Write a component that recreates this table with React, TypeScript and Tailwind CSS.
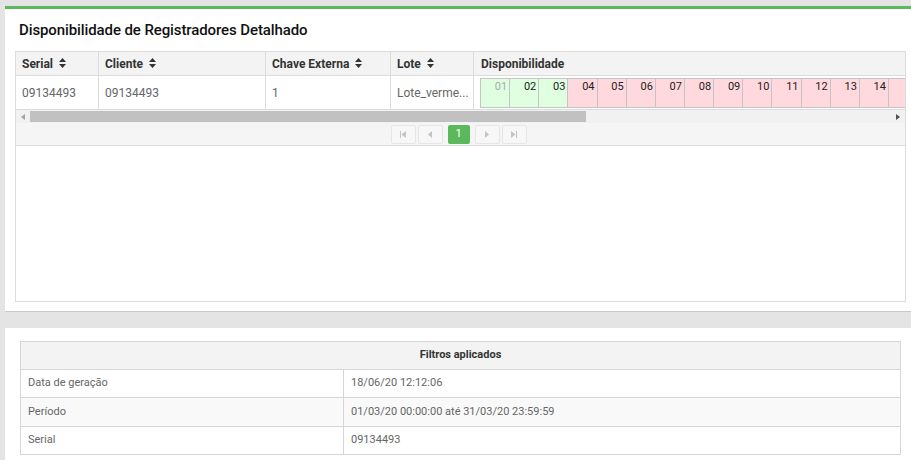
import React from "react";

const days = Array.from({ length: 14 }, (_, i) => String(i + 1).padStart(2, "0"));

function SortIcon() {
  return (
    <svg width="7" height="10" viewBox="0 0 7 10" className="inline-block ml-[6px] -mt-[2px]">
      <path d="M3.5 0 L7 4 L0 4 Z" fill="#333" />
      <path d="M3.5 10 L7 6 L0 6 Z" fill="#333" />
    </svg>
  );
}

function PagBtn({ children }: { children: React.ReactNode }) {
  return (
    <div className="w-[25px] h-[19px] border border-[#e6e6e6] rounded-[2px] bg-[#f7f7f8] flex items-center justify-center">
      {children}
    </div>
  );
}

export default function App() {
  return (
    <div
      className="w-[911px] h-[460px] overflow-hidden bg-[#e4e4e4] pl-[5px] pt-[6px]"
      style={{ fontFamily: "Roboto, 'Liberation Sans', sans-serif" }}
    >
      {/* Panel 1 */}
      <div className="w-[920px] h-[306px] bg-white border-t-[3px] border-[#5cb85c] border-b border-b-[#c9c9c9] px-[10px] flex flex-col">
        <div className="h-[42px] flex items-center pl-[4px] pt-[1px]">
          <h1 className="text-[15px] font-medium text-[#111] tracking-[-0.1px]">
            Disponibilidade de Registradores Detalhado
          </h1>
        </div>
        <div className="w-[891px] h-[251px] border border-[#dcdcdc] flex flex-col overflow-hidden">
          {/* header */}
          <div className="flex h-[24px] bg-[#f3f3f3] border-b border-[#dcdcdc] text-[12px] font-bold text-[#333]">
            <div className="w-[83px] border-r border-[#dcdcdc] pl-[6px] flex items-center">Serial<SortIcon /></div>
            <div className="w-[167px] border-r border-[#dcdcdc] pl-[6px] flex items-center">Cliente<SortIcon /></div>
            <div className="w-[125px] border-r border-[#dcdcdc] pl-[6px] flex items-center">Chave Externa<SortIcon /></div>
            <div className="w-[83px] border-r border-[#dcdcdc] pl-[6px] flex items-center">Lote<SortIcon /></div>
            <div className="flex-1 pl-[7px] flex items-center">Disponibilidade</div>
          </div>
          {/* row */}
          <div className="flex h-[34px] border-b border-[#dcdcdc] text-[12px] text-[#666]">
            <div className="w-[83px] border-r border-[#dcdcdc] pl-[6px] flex items-center">09134493</div>
            <div className="w-[167px] border-r border-[#dcdcdc] pl-[6px] flex items-center">09134493</div>
            <div className="w-[125px] border-r border-[#dcdcdc] pl-[6px] flex items-center">1</div>
            <div className="w-[83px] border-r border-[#dcdcdc] pl-[6px] flex items-center">Lote_verme...</div>
            <div className="w-[431px] min-w-0 pl-[6px] pt-[2px] overflow-hidden">
              <div className="flex h-[30px] border border-[#c4c4c4] w-max">
                {days.map((d, i) => (
                  <div
                    key={d}
                    className={`w-[29.15px] h-full border-r border-[#c4c4c4] text-[11px] text-right pr-[2px] leading-[13px] pt-[1px] ${
                      i < 3 ? "bg-[#dfffe0]" : "bg-[#ffd9dd]"
                    } ${i === 0 ? "text-[#aaa]" : "text-[#222]"}`}
                  >
                    {d}
                  </div>
                ))}
                <div className="w-[29px] h-full bg-[#ffd9dd]" />
              </div>
            </div>
          </div>
          {/* scrollbar */}
          <div className="h-[13px] bg-[#f1f1f1] flex items-center">
            <div className="w-[14px] flex justify-center">
              <svg width="4" height="6" viewBox="0 0 4 6"><path d="M4 0 L0 3 L4 6 Z" fill="#a3a3a3" /></svg>
            </div>
            <div className="w-[556px] h-[11px] bg-[#c1c1c1]" />
            <div className="flex-1" />
            <div className="w-[14px] flex justify-center">
              <svg width="4" height="6" viewBox="0 0 4 6"><path d="M0 0 L4 3 L0 6 Z" fill="#505050" /></svg>
            </div>
          </div>
          {/* pagination */}
          <div className="h-[23px] bg-[#f5f5f6] border-b border-[#dcdcdc] flex items-center justify-center gap-[2px] pr-[4px]">
            <PagBtn>
              <svg width="6" height="7" viewBox="0 0 6 7"><rect x="0" y="0" width="1" height="7" fill="#c4c4c4" /><path d="M6 0 L1.5 3.5 L6 7 Z" fill="#c4c4c4" /></svg>
            </PagBtn>
            <PagBtn>
              <svg width="4" height="7" viewBox="0 0 4 7"><path d="M4 0 L0 3.5 L4 7 Z" fill="#c4c4c4" /></svg>
            </PagBtn>
            <div className="w-[22px] h-[19px] mx-[3px] rounded-[2px] bg-[#5cb85c] text-white text-[11px] flex items-center justify-center">1</div>
            <PagBtn>
              <svg width="4" height="7" viewBox="0 0 4 7"><path d="M0 0 L4 3.5 L0 7 Z" fill="#c4c4c4" /></svg>
            </PagBtn>
            <PagBtn>
              <svg width="6" height="7" viewBox="0 0 6 7"><path d="M0 0 L4.5 3.5 L0 7 Z" fill="#c4c4c4" /><rect x="5" y="0" width="1" height="7" fill="#c4c4c4" /></svg>
            </PagBtn>
          </div>
          <div className="flex-1 bg-white" />
        </div>
      </div>

      {/* Panel 2 */}
      <div className="mt-[16px] w-[920px] h-[200px] bg-white pl-[15px] pt-[13px]">
        <div className="w-[881px] border border-[#d6d6d6] text-[11px] text-[#666]">
          <div className="h-[28px] bg-[#f3f3f3] border-b border-[#d6d6d6] flex items-center justify-center font-bold text-[#333]">
            Filtros aplicados
          </div>
          <div className="flex h-[28px] border-b border-[#d6d6d6] bg-white">
            <div className="w-[323px] border-r border-[#d6d6d6] pl-[7px] flex items-center">Data de geração</div>
            <div className="flex-1 pl-[7px] flex items-center">18/06/20 12:12:06</div>
          </div>
          <div className="flex h-[29px] border-b border-[#d6d6d6] bg-[#f9f9f9]">
            <div className="w-[323px] border-r border-[#d6d6d6] pl-[7px] flex items-center">Período</div>
            <div className="flex-1 pl-[7px] flex items-center">01/03/20 00:00:00 até 31/03/20 23:59:59</div>
          </div>
          <div className="flex h-[27px] bg-white">
            <div className="w-[323px] border-r border-[#d6d6d6] pl-[7px] flex items-center">Serial</div>
            <div className="flex-1 pl-[7px] flex items-center">09134493</div>
          </div>
        </div>
      </div>
    </div>
  );
}
